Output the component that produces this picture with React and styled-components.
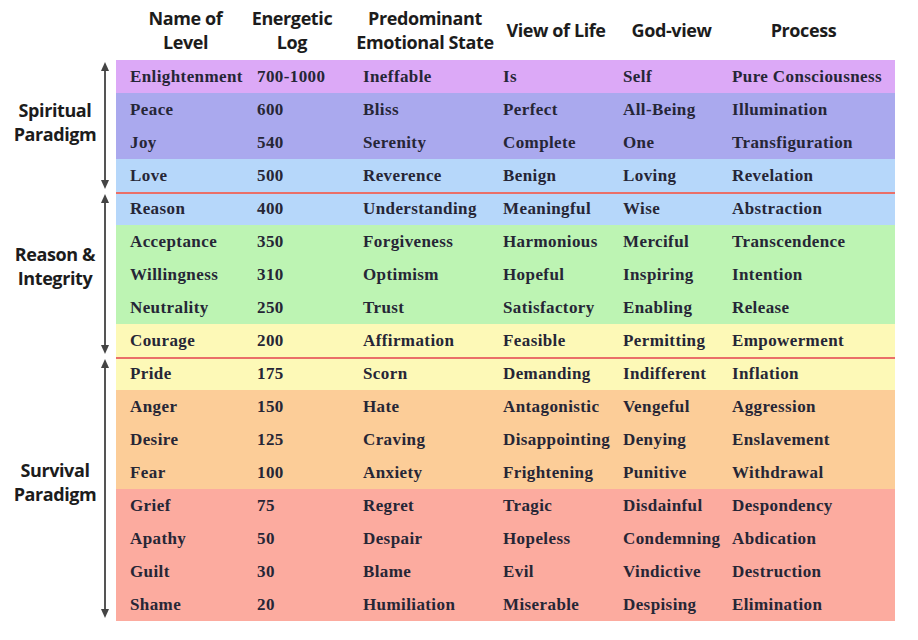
import React from 'react';
import styled, { createGlobalStyle } from 'styled-components';

// --- Data ---
const BANDS = {
  violet: '#dca9f7',
  indigo: '#aaa9ee',
  blue: '#b6d7fa',
  green: '#bdf4b3',
  yellow: '#fdf9b7',
  orange: '#fccd98',
  salmon: '#fcab9f',
};

const COLUMNS = [
  { title: ['Name of', 'Level'], shift: 6 },
  { title: ['Energetic', 'Log'], shift: -4 },
  { title: ['Predominant', 'Emotional State'], shift: 6 },
  { title: ['View of Life'], shift: 7 },
  { title: ['God-view'], shift: 8 },
  { title: ['Process'], shift: -3 },
];

const LEVELS = [
  ['Enlightenment', '700-1000', 'Ineffable', 'Is', 'Self', 'Pure Consciousness', 'violet'],
  ['Peace', '600', 'Bliss', 'Perfect', 'All-Being', 'Illumination', 'indigo'],
  ['Joy', '540', 'Serenity', 'Complete', 'One', 'Transfiguration', 'indigo'],
  ['Love', '500', 'Reverence', 'Benign', 'Loving', 'Revelation', 'blue'],
  ['Reason', '400', 'Understanding', 'Meaningful', 'Wise', 'Abstraction', 'blue', true],
  ['Acceptance', '350', 'Forgiveness', 'Harmonious', 'Merciful', 'Transcendence', 'green'],
  ['Willingness', '310', 'Optimism', 'Hopeful', 'Inspiring', 'Intention', 'green'],
  ['Neutrality', '250', 'Trust', 'Satisfactory', 'Enabling', 'Release', 'green'],
  ['Courage', '200', 'Affirmation', 'Feasible', 'Permitting', 'Empowerment', 'yellow'],
  ['Pride', '175', 'Scorn', 'Demanding', 'Indifferent', 'Inflation', 'yellow', true],
  ['Anger', '150', 'Hate', 'Antagonistic', 'Vengeful', 'Aggression', 'orange'],
  ['Desire', '125', 'Craving', 'Disappointing', 'Denying', 'Enslavement', 'orange'],
  ['Fear', '100', 'Anxiety', 'Frightening', 'Punitive', 'Withdrawal', 'orange'],
  ['Grief', '75', 'Regret', 'Tragic', 'Disdainful', 'Despondency', 'salmon'],
  ['Apathy', '50', 'Despair', 'Hopeless', 'Condemning', 'Abdication', 'salmon'],
  ['Guilt', '30', 'Blame', 'Evil', 'Vindictive', 'Destruction', 'salmon'],
  ['Shame', '20', 'Humiliation', 'Miserable', 'Despising', 'Elimination', 'salmon'],
];

const PARADIGMS = [
  { label: ['Spiritual', 'Paradigm'], rows: 4, lift: 8 },
  { label: ['Reason &', 'Integrity'], rows: 5, lift: 16 },
  { label: ['Survival', 'Paradigm'], rows: 8, lift: 14 },
];

const ROW_H = 33;
const GRID = '127px 106px 140px 120px 109px 177px';

// --- Styled ---
const GlobalStyle = createGlobalStyle`
  html, body { margin: 0; padding: 0; background: #ffffff; }
  body { width: 918px; height: 640px; overflow: hidden; }
`;

const Page = styled.div`
  width: 918px; height: 640px; display: flex; flex-direction: column;
`;

const HeaderRow = styled.div`
  height: 60px; display: grid; grid-template-columns: ${GRID};
  margin-left: 116px; align-items: center;
  font-family: "Open Sans", "Liberation Sans", sans-serif;
  font-weight: 700; font-size: 18px; line-height: 24px; letter-spacing: -0.4px; color: #1c1c1c;
`;

const HeaderCell = styled.div`
  display: flex; flex-direction: column; align-items: center; text-align: center;
  white-space: nowrap; transform: translateX(${p => p.shift}px);
`;

const Body = styled.div` display: flex; `;

const Side = styled.div`
  width: 116px; display: flex; flex-direction: column; padding-left: 10px;
  box-sizing: border-box;
`;

const Section = styled.div`
  height: ${p => p.rows * ROW_H}px; display: flex; align-items: stretch;
  padding: 2px 0 3px; box-sizing: border-box;
`;

const SideLabel = styled.div`
  width: 90px; display: flex; flex-direction: column; justify-content: center;
  align-items: center; padding-bottom: ${p => p.lift}px; box-sizing: border-box;
  font-family: "Open Sans", "Liberation Sans", sans-serif;
  font-weight: 700; font-size: 18px; line-height: 24px; letter-spacing: -0.4px;
  color: #1c1c1c; white-space: nowrap;
`;

const Arrow = styled.div`
  width: 9px; display: flex; flex-direction: column; align-items: center;
`;

const Head = styled.div`
  width: 0; height: 0; border-left: 4.5px solid transparent; border-right: 4.5px solid transparent;
  ${p => p.down ? 'border-top: 9px solid #444;' : 'border-bottom: 9px solid #444;'}
`;

const Shaft = styled.div` flex: 1; width: 2px; background: #555; `;

const Table = styled.div` width: 779px; display: flex; flex-direction: column; `;

const Row = styled.div`
  height: ${ROW_H}px; display: grid; grid-template-columns: ${GRID}; align-items: center;
  background: ${p => BANDS[p.band]};
  box-shadow: ${p => p.divider ? 'inset 0 2px 0 #ea6f68' : 'none'};
  font-family: "Liberation Serif", "Times New Roman", serif;
  font-weight: 700; font-size: 17px; letter-spacing: 0.4px; color: #262636;
`;

const Cell = styled.div` padding-left: 14px; white-space: nowrap; padding-top: 1px; `;

export default function App() {
  return (
    <>
      <GlobalStyle />
      <Page>
        <HeaderRow>
          {COLUMNS.map(c => (
            <HeaderCell key={c.title.join()} shift={c.shift}>
              {c.title.map(t => <span key={t}>{t}</span>)}
            </HeaderCell>
          ))}
        </HeaderRow>
        <Body>
          <Side>
            {PARADIGMS.map(p => (
              <Section key={p.label.join()} rows={p.rows}>
                <SideLabel lift={p.lift}>
                  {p.label.map(t => <span key={t}>{t}</span>)}
                </SideLabel>
                <Arrow>
                  <Head />
                  <Shaft />
                  <Head down />
                </Arrow>
              </Section>
            ))}
          </Side>
          <Table>
            {LEVELS.map(([name, log, emotion, life, god, process, band, divider]) => (
              <Row key={name} band={band} divider={divider}>
                <Cell>{name}</Cell>
                <Cell>{log}</Cell>
                <Cell>{emotion}</Cell>
                <Cell>{life}</Cell>
                <Cell>{god}</Cell>
                <Cell>{process}</Cell>
              </Row>
            ))}
          </Table>
        </Body>
      </Page>
    </>
  );
}
